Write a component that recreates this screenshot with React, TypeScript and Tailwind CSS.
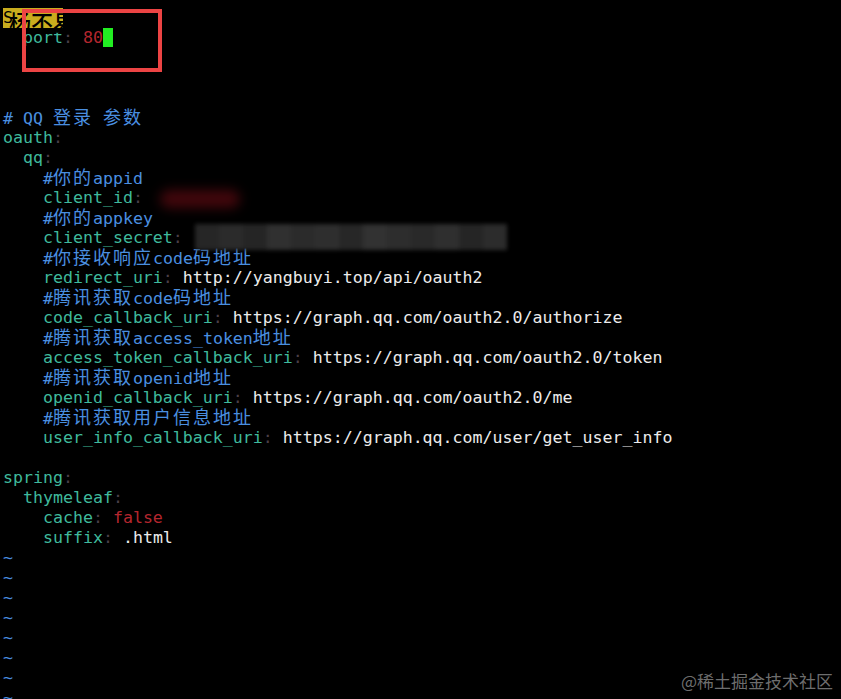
import React from "react";

const mono = { fontFamily: '"DejaVu Sans Mono", "Noto Sans CJK SC", monospace' };

// split text so that CJK runs get a double-width cell like in a terminal
function Cells({ text, className = "" }: { text: string; className?: string }) {
  const parts = text.split(/([\u3000-\u9fff\uff00-\uffef]+)/).filter(Boolean);
  return (
    <span className={className}>
      {parts.map((p, i) =>
        /[\u3000-\u9fff\uff00-\uffef]/.test(p) ? (
          <span key={i} className="text-[18px] tracking-[2px]">
            {p}
          </span>
        ) : (
          <span key={i}>{p}</span>
        )
      )}
    </span>
  );
}

const Key = ({ t }: { t: string }) => <Cells text={t} className="text-[#3fb99c]" />;
const Colon = () => <span className="text-[#4a3f48]">:</span>;
const Val = ({ t }: { t: string }) => <Cells text={" " + t} className="text-[#ececec]" />;
const Comment = ({ t }: { t: string }) => <Cells text={t} className="text-[#4a8fe0]" />;

function Row({ children }: { children?: React.ReactNode }) {
  return <div className="h-5 whitespace-pre leading-5">{children ?? " "}</div>;
}

function Pair({ indent, k, v, red }: { indent: number; k: string; v?: string; red?: boolean }) {
  return (
    <Row>
      {" ".repeat(indent)}
      <Key t={k} />
      <Colon />
      {v !== undefined &&
        (red ? <span className="text-[#b4262e]">{" " + v}</span> : <Val t={v} />)}
    </Row>
  );
}

const greys = ["#2b2b2b", "#303030", "#2a2a2a", "#363636", "#303030", "#343434", "#2c2c2c", "#383838", "#323232", "#2e2e2e", "#353535", "#2a2a2a", "#313131"];

export default function App() {
  return (
    <div className="relative h-[699px] w-full overflow-hidden bg-black pl-[3px] pt-2 text-[16.6px]" style={mono}>
      <Row>
        <span className="inline-block w-[60px] bg-[#c9ad1e] text-black">S</span>
      </Row>
      <Row>
        {"  "}
        <Key t="port" />
        <Colon />
        <span className="text-[#b4262e]"> 80</span>
        <span className="inline-block h-[19px] w-[10px] bg-[#22ee22] align-[-4px]" />
      </Row>
      <Row />
      <Row />
      <Row />
      <Row>
        <Comment t="# QQ 登录 参数" />
      </Row>
      <Pair indent={0} k="oauth" />
      <Pair indent={2} k="qq" />
      <Row>
        {"    "}
        <Comment t="#你的appid" />
      </Row>
      <Row>
        {"    "}
        <Key t="client_id" />
        <Colon />
        <span className="ml-[17px] inline-block h-[18px] w-[80px] rounded-full bg-[#42070c] align-middle blur-[6px]" />
      </Row>
      <Row>
        {"    "}
        <Comment t="#你的appkey" />
      </Row>
      <Row>
        {"    "}
        <Key t="client_secret" />
        <Colon />
        <span className="ml-[12px] -mt-[4px] inline-flex h-[26px] w-[312px] align-top opacity-90 blur-[2px]">
          {greys.map((g, i) => (
            <span key={i} className="h-full flex-1" style={{ background: g }} />
          ))}
        </span>
      </Row>
      <Row>
        {"    "}
        <Comment t="#你接收响应code码地址" />
      </Row>
      <Pair indent={4} k="redirect_uri" v="http://yangbuyi.top/api/oauth2" />
      <Row>
        {"    "}
        <Comment t="#腾讯获取code码地址" />
      </Row>
      <Pair indent={4} k="code_callback_uri" v="https://graph.qq.com/oauth2.0/authorize" />
      <Row>
        {"    "}
        <Comment t="#腾讯获取access_token地址" />
      </Row>
      <Pair indent={4} k="access_token_callback_uri" v="https://graph.qq.com/oauth2.0/token" />
      <Row>
        {"    "}
        <Comment t="#腾讯获取openid地址" />
      </Row>
      <Pair indent={4} k="openid_callback_uri" v="https://graph.qq.com/oauth2.0/me" />
      <Row>
        {"    "}
        <Comment t="#腾讯获取用户信息地址" />
      </Row>
      <Pair indent={4} k="user_info_callback_uri" v="https://graph.qq.com/user/get_user_info" />
      <Row />
      <Pair indent={0} k="spring" />
      <Pair indent={2} k="thymeleaf" />
      <Pair indent={4} k="cache" v="false" red />
      <Pair indent={4} k="suffix" v=".html" />
      {Array.from({ length: 8 }).map((_, i) => (
        <Row key={i}>
          <span className="text-[#4a8fe0]">~</span>
        </Row>
      ))}

      {/* name scribbled over the first line */}
      <div
        className="absolute left-[9px] top-[10px] text-[22px] leading-[22px] font-medium text-black"
        style={{ fontFamily: '"Noto Sans CJK SC", sans-serif' }}
      >
        杨不易
      </div>

      {/* red highlight frame */}
      <div className="absolute left-[22px] top-[9px] h-[63px] w-[140px] border-4 border-[#ec4444]" />

      <div
        className="absolute bottom-[8px] right-[8px] text-[17px] leading-5 text-[#8c8c8c]/80"
        style={{ fontFamily: '"Noto Sans CJK SC", sans-serif' }}
      >
        @稀土掘金技术社区
      </div>
    </div>
  );
}
